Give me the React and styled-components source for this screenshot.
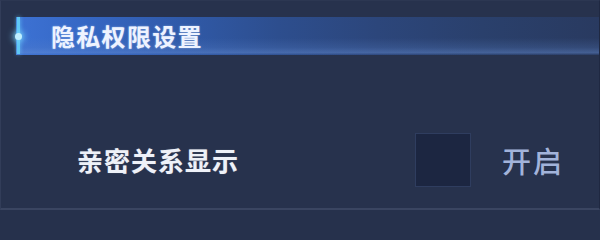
import React from "react";
import styled, { createGlobalStyle } from "styled-components";

const Global = createGlobalStyle`
  html, body { margin: 0; padding: 0; background: #26314c; }
  body { font-family: "Noto Sans CJK SC", "Noto Sans", sans-serif; }
`;

const Panel = styled.div`
  box-sizing: border-box;
  width: 600px;
  height: 210px;
  background: #27324d;
  border-left: 1px solid #323d59;
  border-right: 1px solid #1f2841;
  border-bottom: 2px solid #3a4561;
  border-top: 1px solid #2c3752;
  padding-top: 16px;
  display: flex;
  flex-direction: column;
`;

const Header = styled.div`
  position: relative;
  margin-left: 15px;
  height: 38px;
  display: flex;
  align-items: center;
  padding-left: 35px;
  background:
    linear-gradient(180deg, rgba(0,0,0,0) 55%, rgba(90,130,200,0.22) 80%, rgba(105,145,215,0.42) 94%, rgba(0,0,0,0) 100%),
    linear-gradient(90deg, #3d72d4 0%, #3567c4 12%, #305aa9 28%, #2d4e8e 45%, #2c467b 62%, #2a406c 80%, #293a60 100%);
  &::before {
    content: "";
    position: absolute;
    left: 1px;
    top: 0;
    bottom: 1px;
    width: 3px;
    background: #5fc8f5;
    box-shadow: 0 0 4px rgba(110, 210, 255, 0.8);
  }
  &::after {
    content: "";
    position: absolute;
    left: -1px;
    top: 16px;
    width: 7px;
    height: 7px;
    border-radius: 50%;
    background: #bff0ff;
    box-shadow: 0 0 6px 2px rgba(120, 215, 255, 0.8);
  }
`;

const Title = styled.span`
  font-size: 24px;
  line-height: 1;
  font-weight: 700;
  letter-spacing: 1.3px;
  color: #eef3ff;
  text-shadow: 0 0 2px rgba(200, 225, 255, 0.6);
`;

const Row = styled.div`
  display: flex;
  align-items: center;
  margin-top: 78px;
  padding-left: 76px;
  height: 54px;
`;

const Label = styled.span`
  width: 338px;
  font-size: 26px;
  line-height: 1;
  font-weight: 700;
  letter-spacing: 1px;
  color: #eef1f8;
  text-shadow: 0 0 1px rgba(255, 255, 255, 0.4);
`;

const Check = styled.div`
  box-sizing: border-box;
  width: 56px;
  height: 54px;
  background: #1c2641;
  border: 1px solid #2f3d5f;
`;

const Status = styled.span`
  margin-left: 31px;
  font-size: 29px;
  line-height: 1;
  font-weight: 500;
  letter-spacing: 2px;
  color: #a2b3da;
`;

export default function App() {
  return (
    <>
      <Global />
      <Panel>
        <Header>
          <Title>隐私权限设置</Title>
        </Header>
        <Row>
          <Label>亲密关系显示</Label>
          <Check />
          <Status>开启</Status>
        </Row>
      </Panel>
    </>
  );
}
